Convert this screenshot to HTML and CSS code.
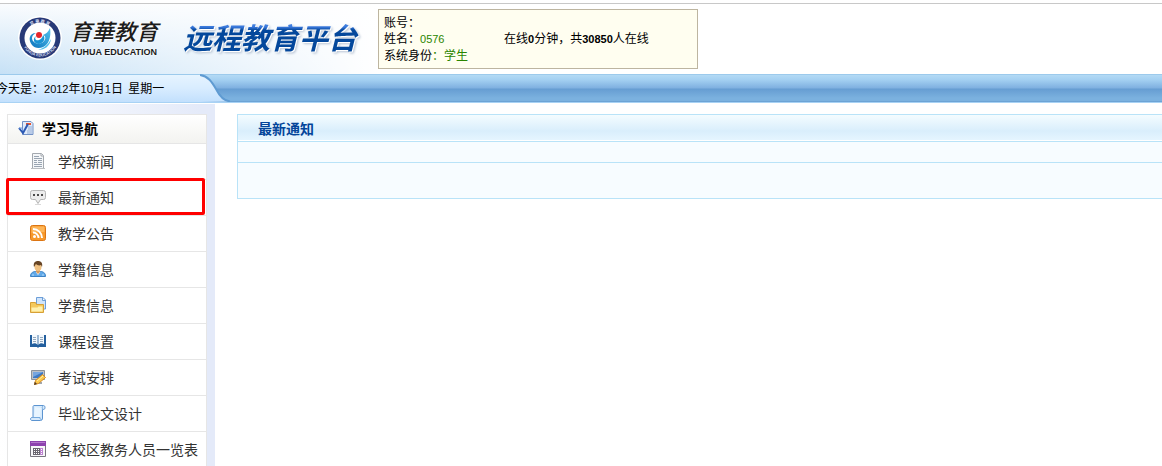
FILE: index.html
```html
<!DOCTYPE html>
<html lang="zh-CN">

<head>
  <meta charset="UTF-8">
  <meta name="viewport" content="width=device-width, initial-scale=1.0">
  <title>远程教育平台</title>
  <link rel="stylesheet" href="styles.css">
</head>

<body>
  <header class="header">
    <div class="logo">
      <svg class="logo-badge" width="44" height="44" viewBox="0 0 44 44">
        <defs>
          <path id="arcTop" d="M6.500 22a15.500 15.500 0 0 1 31 0" />
          <path id="arcBottom" d="M3.500 22a18.500 18.500 0 0 0 37 0" />
          <linearGradient id="swoosh" x1="0" y1="1" x2="1" y2="0">
            <stop offset="0" stop-color="#0b74bd" />
            <stop offset="1" stop-color="#52c0ec" />
          </linearGradient>
        </defs>
        <circle cx="22" cy="22" r="22" fill="#fff" />
        <circle cx="22" cy="22" r="20.500" fill="#283a78" />
        <circle cx="22" cy="22" r="15.500" fill="#fff" />
        <path d="M18 17C11 17 10 24 14 29C17 33 25 33 29 28C32 24 33 18 32 12C30 16 28 18 25 19C28 20 28 23 26 25C23 29 17 28 15 25C13 22 14 19 18 17Z" fill="url(#swoosh)" />
        <path d="M18 20C16 23 18 25 21 24C24 23 25 20 25 19C28 22 26 27 21 28C16 28 14 23 18 20Z" fill="#1a93d3" />
        <path d="M20 34C27 34 32 30 33 23C30 29 26 32 20 34Z" fill="#52c0ec" />
        <circle cx="21" cy="19" r="3" fill="#e5262b" />
        <text class="badge-text"><textPath href="#arcTop" startOffset="50%">育 華 教 育</textPath></text>
        <text class="badge-text"><textPath href="#arcBottom" startOffset="50%">YUHUA EDUCATION</textPath></text>
      </svg>
      <div class="logo-name">
        <span class="logo-cn">育華教育</span>
        <span class="logo-en">YUHUA EDUCATION</span>
      </div>
    </div>
    <h1 class="platform">远程教育平台</h1>
    <div class="account">
      <div>账号：</div>
      <div class="account-row">
        <span class="account-name">姓名：<span class="num green">0576</span></span>
        <span>在线<b class="num">0</b>分钟，共<b class="num">30850</b>人在线</span>
      </div>
      <div>系统身份<span class="green">：学生</span></div>
    </div>
  </header>

  <div class="bar">
    <div class="date">今天是：<span class="num">2012</span>年<span class="num">10</span>月<span class="num">1</span>日&nbsp; 星期一</div>
    <svg class="bar-curve" width="40" height="29" viewBox="0 0 40 29">
      <defs>
        <linearGradient id="tab" x1="0" y1="0" x2="0" y2="1">
          <stop offset="0" stop-color="#e6f4ff" />
          <stop offset="0.500" stop-color="#d8ecff" />
          <stop offset="1" stop-color="#c2e0fd" />
        </linearGradient>
      </defs>
      <path d="M0 1C8 2 12 8 16 15C20 23 24 27 30 27.500L0 28Z" fill="url(#tab)" />
      <path d="M0 1C8 2 12 8 16 15C20 23 24 27 30 27.500" fill="none" stroke="#5f9bd2" stroke-width="2" />
      <path d="M0 28.500H40" stroke="#a8d2f4" />
    </svg>
  </div>

  <div class="content">
    <aside class="sidebar">
      <nav class="nav">
        <h2 class="nav-title">
          <svg width="16" height="16" viewBox="0 0 16 16">
            <path d="M4.500 1.500H13l2 2v11H4.500Z" fill="#dfeafa" stroke="#7191c6" />
            <path d="M8 4h5" stroke="#e8542f" stroke-width="2" />
            <path d="M10 7h4M10 9h4M9 11h5M9 13h5" stroke="#93acd5" />
            <path d="M1 8l4 5 5-9" fill="none" stroke="#2d5ab4" stroke-width="2" />
            <path d="M1 8h3l1 3" fill="none" stroke="#6c98df" />
          </svg>
          学习导航
        </h2>
        <ul class="nav-list">
          <li>
            <a href="#">
              <svg width="16" height="16" viewBox="0 0 16 16">
                <path d="M2.500.500h9l2 2v13h-11Z" fill="#f5f7f9" stroke="#a4a9af" />
                <path d="M11 1v2h2" fill="none" stroke="#a4a9af" />
                <path d="M4 3.500h5M4 5.500h8M4 7.500h3M8 7.500h4M4 9.500h3M8 9.500h4M4 11.500h8M4 13.500h8" stroke="#9aa5b2" />
                <path d="M1 15.500h14" stroke="#babdc1" />
              </svg>
              学校新闻
            </a>
          </li>
          <li class="active">
            <a href="#">
              <svg width="16" height="16" viewBox="0 0 16 16">
                <path d="M2.500 1.500h11a2 2 0 0 1 2 2v5a2 2 0 0 1-2 2h-3L8 14.500l-2.500-4h-3a2 2 0 0 1-2-2v-5a2 2 0 0 1 2-2Z" fill="#ececec" stroke="#b5b5b5" />
                <path d="M3 5h2v2H3ZM7 5h2v2H7ZM11 5h2v2h-2Z" fill="#4b4b4b" />
                <path d="M5 15.500h6" stroke="#d9d9d9" />
              </svg>
              最新通知
            </a>
          </li>
          <li>
            <a href="#">
              <svg width="16" height="16" viewBox="0 0 16 16">
                <rect x="0.500" y="0.500" width="15" height="15" rx="2" fill="#f7992b" stroke="#dc7513" />
                <path d="M1.500 8V2.500a1 1 0 0 1 1-1h11a1 1 0 0 1 1 1V7Z" fill="#fdb659" />
                <circle cx="4.500" cy="11.500" r="1.500" fill="#fff" />
                <path d="M3 7.500a5.500 5.500 0 0 1 5.500 5.500M3 4a9 9 0 0 1 9 9" fill="none" stroke="#fff" stroke-width="2" />
              </svg>
              教学公告
            </a>
          </li>
          <li>
            <a href="#">
              <svg width="16" height="16" viewBox="0 0 16 16">
                <path d="M.500 15.500c0-3 1-4 4-5h7c3 1 4 2 4 5Z" fill="#61a9e8" stroke="#3e83c5" />
                <path d="M5.500 10.500L8 14l2.500-3.500Z" fill="#fff" />
                <path d="M6 8h4v3l-2 2-2-2Z" fill="#d79b5d" />
                <ellipse cx="8" cy="6" rx="3.500" ry="4" fill="#f0c182" />
                <path d="M4 6C3 2 5 0 8 0s5 2 4 6l-1-2C9 5 7 4 6 3 5 4 5 5 4 6Z" fill="#674525" />
                <path d="M3 13v2M13 13v2" stroke="#b9dcfa" />
              </svg>
              学籍信息
            </a>
          </li>
          <li>
            <a href="#">
              <svg width="16" height="16" viewBox="0 0 16 16">
                <path d="M6.500.500H13l2.500 2.500v9h-9Z" fill="#cfe4fb" stroke="#6d9ed8" />
                <path d="M12.500 1v2.500H15" fill="#fff" stroke="#6d9ed8" />
                <path d="M.500 15.500v-10h5l1 2h7v8Z" fill="#f4c95d" stroke="#d7a036" />
                <path d="M1.500 14.500v-4h6l1-1h4v5Z" fill="#fff1af" />
              </svg>
              学费信息
            </a>
          </li>
          <li>
            <a href="#">
              <svg width="16" height="16" viewBox="0 0 16 16">
                <path d="M0 2h16v12H9l-1 1-1-1H0Z" fill="#235f9e" />
                <path d="M2 2c2-1 4-1 6 0 2-1 4-1 6 0v9c-2-1-4-1-6 1-2-2-4-2-6-1Z" fill="#f3f8fc" />
                <path d="M8 2v10" stroke="#497aad" />
                <path d="M3 4.500h3M3 6.500h3M3 8.500h3M10 4.500h3M10 6.500h3M10 8.500h3" stroke="#94a8bd" />
              </svg>
              课程设置
            </a>
          </li>
          <li>
            <a href="#">
              <svg width="16" height="16" viewBox="0 0 16 16">
                <path d="M1.500 1.500h13v9h-13Z" fill="#bcc1c8" stroke="#8c929b" />
                <path d="M3 3h10v6H3Z" fill="#3e79c4" />
                <path d="M3 3h10L3 8Z" fill="#76a5df" />
                <path d="M6 11h4v2h2v2H4v-2h2Z" fill="#a1a6ad" />
                <path d="M4.500 15.500l1-4 7-6 3 3-7 6Z" fill="#fbc94e" stroke="#d68b25" />
                <path d="M4 16l1-3 2 2Z" fill="#513b24" />
                <path d="M7 12l6-5" stroke="#fff0a8" />
              </svg>
              考试安排
            </a>
          </li>
          <li>
            <a href="#">
              <svg width="16" height="16" viewBox="0 0 16 16">
                <path d="M4 .500h9.500c2 0 2 4 0 4h-1V13c0 2-1 2.500-2 2.500H2c-2 0-2-3 0-3h1V2c0-1 .500-1.500 1-1.500Z" fill="#d7eafc" stroke="#5c94d0" />
                <path d="M5 2L4 12h6l1-9Z" fill="#e8f5ff" />
                <path d="M2 12.500h8c0 2 1 2.500 2 2M13 1c-1 1-1 2 0 3" fill="none" stroke="#77aadd" />
              </svg>
              毕业论文设计
            </a>
          </li>
          <li>
            <a href="#">
              <svg width="16" height="16" viewBox="0 0 16 16">
                <path d="M.500.500h15v15H.500Z" fill="#f8f7fa" stroke="#77747e" />
                <path d="M0 0h16v5H0Z" fill="#8d42ae" />
                <path d="M1 1h14v1H1Z" fill="#b577cd" />
                <path d="M3 7h7v7H3Z" fill="#6a6670" />
                <path d="M10 7h3v7h-3Z" fill="#bd83d0" />
                <path d="M4 8h1v1H4ZM6 8h1v1H6ZM8 8h1v1H8ZM4 10h1v1H4ZM6 10h1v1H6ZM8 10h1v1H8ZM4 12h1v1H4ZM6 12h1v1H6ZM8 12h1v1H8ZM11 8h1v1h-1ZM11 10h1v1h-1ZM11 12h1v1h-1Z" fill="#fff" />
              </svg>
              各校区教务人员一览表
            </a>
          </li>
        </ul>
      </nav>
    </aside>

    <main class="main">
      <section class="panel">
        <h2 class="panel-title">最新通知</h2>
        <div class="panel-toolbar"></div>
        <div class="panel-body"></div>
      </section>
    </main>
  </div>
</body>

</html>
```

FILE: styles.css
```css
* {
  box-sizing: border-box;
}

body {
  display: flex;
  flex-direction: column;
  height: 100vh;
  margin: 0;
  padding-top: 3px;
  overflow: hidden;
  background: #fff;
  color: #000;
  font: 12px/16px "Noto Sans CJK SC", sans-serif;
}

h1,
h2,
ul {
  margin: 0;
  padding: 0;
}

svg {
  flex: none;
  display: block;
}

/* 顶部 */
.header {
  display: flex;
  flex: none;
  align-items: flex-start;
  height: 71px;
  padding: 5px 0 0 18px;
  border-top: 1px solid #c8c8c8;
  background: linear-gradient(to right, rgba(255, 255, 255, 0), #fff 380px), linear-gradient(#fafcfe, #c6e1f6);
}

.logo {
  display: flex;
  align-items: center;
  gap: 8px;
  width: 165px;
  padding-top: 7px;
}

.badge-text {
  fill: #d5dcf0;
  font: bold 4px "Liberation Sans", "Noto Sans CJK SC", sans-serif;
  text-anchor: middle;
}

.logo-name {
  display: flex;
  flex-direction: column;
  gap: 2px;
  padding-bottom: 2px;
  color: #1c1c1c;
  white-space: nowrap;
  text-shadow: 0 0 2px #fff, 0 0 3px #fff;
}

.logo-cn {
  font-size: 22px;
  font-style: italic;
  font-weight: 500;
  line-height: 28px;
}

.logo-en {
  font: bold 9px/12px "Liberation Sans", sans-serif;
}

.platform {
  width: 195px;
  padding-top: 7px;
  background: linear-gradient(#3f7fe0 16px, #3a78dc 18px, #04489c 21px);
  -webkit-background-clip: text;
  background-clip: text;
  color: transparent;
  filter: drop-shadow(1px 1px 0 #fff) drop-shadow(1px 1px 1px #b8c4d4);
  font-size: 29px;
  font-style: italic;
  font-weight: 700;
  line-height: 40px;
  white-space: nowrap;
}

.account {
  width: 320px;
  height: 60px;
  padding: 4px 5px;
  border: 1px solid #bdb5a0;
  background: #fffef0;
}

.account-row {
  display: flex;
}

.account-name {
  width: 120px;
}

.num {
  font-family: "Liberation Sans", sans-serif;
  font-size: 11px;
}

.green {
  color: #2a8500;
}

/* 日期条 */
.bar {
  display: flex;
  flex: none;
  height: 29px;
  border-bottom: 1px solid #a8d2f4;
  background: linear-gradient(#9ccaec 1px, #b3daf5 1px, #a3cff1 6px, #7fb0e0 14px, #669dd2 15px, #7bb1df 24px, #7bb1df 27px, #5e95ca 28px);
}

.date {
  width: 204px;
  height: 28px;
  margin-left: -4px;
  border-top: 1px solid #9ccaec;
  background: linear-gradient(#e6f4ff, #d8ecff 50%, #c2e0fd);
  line-height: 26px;
  white-space: nowrap;
}

/* 主体 */
.content {
  display: flex;
  flex: 1;
  min-height: 0;
  padding-top: 1px;
}

.sidebar {
  flex: none;
  width: 215px;
  padding: 10px 8px 0 7px;
  background: linear-gradient(to right, #fff, #e4eaf9 200px);
}

.nav {
  border: 1px solid #e6e6e6;
  background: #fff;
}

.nav-title {
  display: flex;
  align-items: center;
  gap: 8px;
  height: 29px;
  padding: 0 0 2px 10px;
  border-bottom: 1px solid #e6e6e6;
  background: linear-gradient(#fff, #f3f3f0);
  font-size: 14px;
}

.nav-list {
  list-style: none;
}

.nav-list li {
  height: 36px;
  border-bottom: 1px solid #e6e6e6;
}

.nav-list a {
  display: flex;
  align-items: center;
  gap: 12px;
  height: 35px;
  padding: 0 0 2px 22px;
  color: #333;
  font-size: 14px;
  text-decoration: none;
  white-space: nowrap;
}

.nav-list .active {
  position: relative;
}

/* 当前栏目的红框 */
.active::after {
  content: "";
  position: absolute;
  inset: -2px 1px 0 -2px;
  border: 3px solid #f00;
  border-radius: 2px;
}

.main {
  flex: 1;
  min-width: 0;
  padding: 10px 0 0 22px;
}

.panel {
  border: 1px solid #b9e3f8;
  border-right: 0;
  background: #f7fcff;
}

.panel-title {
  height: 27px;
  padding-left: 20px;
  border-bottom: 1px solid #b9e3f8;
  background: linear-gradient(#f4fcff, #d9eefc 16px, #e5f5ff 25px, #fff 25px);
  color: #03459a;
  font-size: 14px;
  line-height: 26px;
}

.panel-toolbar {
  height: 21px;
  border-bottom: 1px solid #b9e3f8;
}

.panel-body {
  height: 35px;
}
```
